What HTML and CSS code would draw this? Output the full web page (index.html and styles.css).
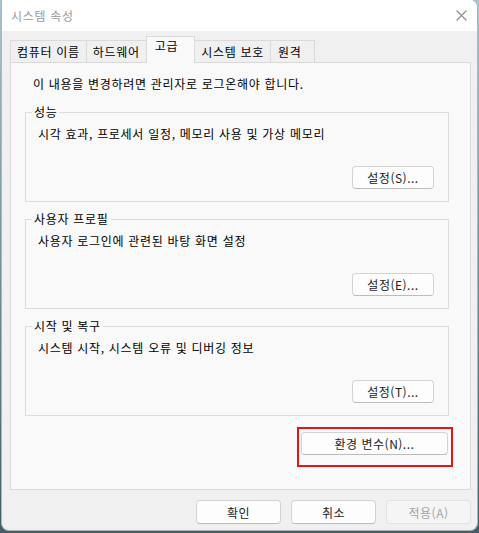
FILE: index.html
```html
<!DOCTYPE html>
<html lang="ko">
<head>
    <meta charset="UTF-8">
    <meta name="viewport" content="width=device-width, initial-scale=1.0">
    <title>시스템 속성</title>
    <link rel="stylesheet" href="styles.css">
</head>
<body>
    <div class="window">
        <div class="title-bar">
            <span class="title">시스템 속성</span>
            <button class="close-btn" aria-label="닫기">
                <svg width="11" height="11" viewBox="0 0 11 11">
                    <path d="M0.5 0.5 L10.5 10.5 M10.5 0.5 L0.5 10.5" stroke="#8c8c8c" stroke-width="1.1" fill="none"/>
                </svg>
            </button>
        </div>

        <div class="content">
            <div class="tabs">
                <div class="tab">컴퓨터 이름</div>
                <div class="tab">하드웨어</div>
                <div class="tab active">고급</div>
                <div class="tab">시스템 보호</div>
                <div class="tab">원격</div>
            </div>

            <div class="panel">
                <p class="notice">이 내용을 변경하려면 관리자로 로그온해야 합니다.</p>

                <fieldset class="group">
                    <legend>성능</legend>
                    <p class="desc">시각 효과, 프로세서 일정, 메모리 사용 및 가상 메모리</p>
                    <div class="group-actions">
                        <button class="btn">설정(S)...</button>
                    </div>
                </fieldset>

                <fieldset class="group">
                    <legend>사용자 프로필</legend>
                    <p class="desc">사용자 로그인에 관련된 바탕 화면 설정</p>
                    <div class="group-actions">
                        <button class="btn">설정(E)...</button>
                    </div>
                </fieldset>

                <fieldset class="group">
                    <legend>시작 및 복구</legend>
                    <p class="desc">시스템 시작, 시스템 오류 및 디버깅 정보</p>
                    <div class="group-actions">
                        <button class="btn">설정(T)...</button>
                    </div>
                </fieldset>

                <div class="env-row">
                    <div class="env-wrap">
                        <button class="btn env-btn">환경 변수(N)...</button>
                        <span class="highlight"></span>
                    </div>
                </div>
            </div>

            <div class="dialog-buttons">
                <button class="btn wide">확인</button>
                <button class="btn wide">취소</button>
                <button class="btn wide" disabled>적용(A)</button>
            </div>
        </div>
    </div>
</body>
</html>
```

FILE: styles.css
```css
body {
    margin: 0;
    height: 533px;
    background: linear-gradient(#a9c3cf, #3f5f64);
    font-family: "Noto Sans CJK KR", "Noto Sans", sans-serif;
    font-size: 12px;
    letter-spacing: 0.7px;
    color: #000;
    overflow: hidden;
}

.window {
    margin-left: 1px;
    width: 475px;
    height: 530px;
    background: #f0f0f0;
    border: 1px solid #b4b4b4;
    border-top: none;
    border-radius: 0 8px 8px 8px;
    overflow: hidden;
}

.title-bar {
    height: 31px;
    background: #fff;
    display: flex;
    align-items: center;
    justify-content: space-between;
    padding: 0 10px 0 9px;
}

.title {
    color: #9a9a9a;
    line-height: 16px;
}

.close-btn {
    border: none;
    background: none;
    padding: 0;
    width: 11px;
    height: 11px;
    display: flex;
}

.content {
    padding: 7px 0 0 8px;
}

/* Tabs */
.tabs {
    display: flex;
    align-items: flex-end;
    height: 24px;
    position: relative;
    z-index: 1;
}

.tab {
    height: 21px;
    line-height: 21px;
    padding: 0 6px 0 6px;
    border: 1px solid #dadada;
    border-bottom: none;
    margin-right: -1px;
    background: #f0f0f0;
    white-space: nowrap;
}

.tab:last-child {
    padding: 0 13px 0 7px;
}

.tab.active {
    height: 25px;
    line-height: 16px;
    padding: 1px 16px 0 8px;
    margin-bottom: -1px;
    background: #f9f9f9;
    border-color: #dadada;
}

/* Panel */
.panel {
    width: 459px;
    background: #f9f9f9;
    border: 1px solid #d9d9d9;
    padding: 13px 0 34px 0;
}

.notice {
    margin: 0 0 12px 22px;
    line-height: 16px;
}

.group {
    margin: 0 21px 9px 14px;
    padding: 6px 14px 12px 12px;
    border: 1px solid #dcdcdc;
}

.group legend {
    padding: 0 2px;
    margin-left: -6px;
    line-height: 16px;
}

.desc {
    margin: 0;
    line-height: 16px;
}

.group-actions {
    display: flex;
    justify-content: flex-end;
    margin-top: 24px;
}

.btn {
    width: 82px;
    height: 23px;
    padding: 0;
    font-family: inherit;
    font-size: 12px;
    letter-spacing: 0.5px;
    color: #1b1b1b;
    background: #fdfdfd;
    border: 1px solid #d3d3d3;
    border-bottom-color: #bcbcbc;
    border-radius: 4px;
}

.btn:disabled {
    color: #a3a3a3;
    background: #f5f5f5;
    border-color: #e2e2e2;
}

.env-row {
    display: flex;
    justify-content: flex-end;
    margin: 0 22px 0 0;
}

.env-wrap {
    position: relative;
    padding: 7px 0 0 0;
}

.env-btn {
    width: 147px;
}

.highlight {
    position: absolute;
    left: -4px;
    top: 2px;
    width: 152px;
    height: 36px;
    border: 2px solid #e4141e;
}

/* Bottom buttons */
.dialog-buttons {
    display: flex;
    justify-content: flex-end;
    gap: 10px;
    padding: 10px 6px 0 0;
}

.btn.wide {
    width: 85px;
    height: 24px;
}
```
